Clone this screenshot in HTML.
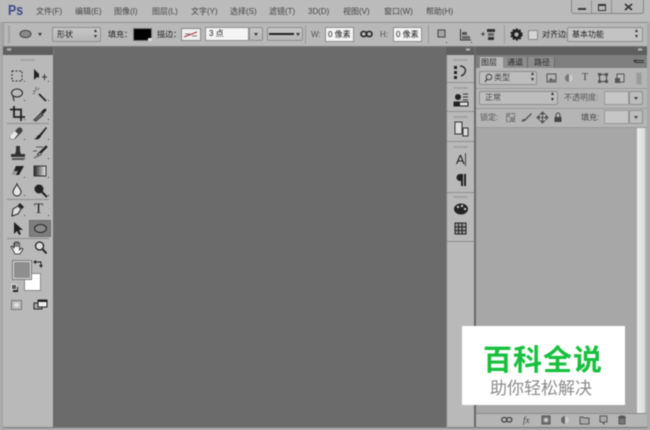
<!DOCTYPE html>
<html><head><meta charset="utf-8">
<style>
html,body{margin:0;padding:0}
body{width:650px;height:430px;overflow:hidden;background:#b9b9b9;position:relative;font-family:"Liberation Sans","Noto Sans CJK SC",sans-serif;color:#222}
#w{position:absolute;left:0;top:0;width:650px;height:430px;overflow:hidden;filter:blur(.4px)}
.a{position:absolute;box-sizing:border-box}
.t{position:absolute;white-space:nowrap;font-size:8px;line-height:10px;color:#333}
.m{position:absolute;white-space:nowrap;font-size:8px;line-height:10px;color:#444;top:7px}
.box{position:absolute;box-sizing:border-box;background:linear-gradient(#c6c6c6,#b6b6b6);border:1px solid #8f8f8f;border-radius:2px}
.wbox{position:absolute;box-sizing:border-box;background:#f4f4f4;border:1px solid #8f8f8f;font-size:8px;line-height:12px;color:#222;white-space:nowrap}
svg{position:absolute;overflow:visible}
.d{position:absolute;width:1px;height:1px;background:#444}
.grip{position:absolute;height:2px;background:repeating-linear-gradient(90deg,#8c8c8c 0 1px,transparent 1px 2px)}
.sep{position:absolute;background:#8e8e8e;height:1px}
</style></head>
<body><div id="w">
<!-- title bar -->
<div class="a" style="left:0;top:0;width:650px;height:22px;background:#bbb"></div>
<div class="t" style="left:8px;top:2px;font-size:15px;line-height:18px;font-weight:bold;color:#414a8c;transform:scaleX(.82);transform-origin:left top">Ps</div>
<div class="m" style="left:36px">文件(F)</div>
<div class="m" style="left:75px">编辑(E)</div>
<div class="m" style="left:114px">图像(I)</div>
<div class="m" style="left:152px">图层(L)</div>
<div class="m" style="left:191px">文字(Y)</div>
<div class="m" style="left:230px">选择(S)</div>
<div class="m" style="left:269px">滤镜(T)</div>
<div class="m" style="left:308px">3D(D)</div>
<div class="m" style="left:343px">视图(V)</div>
<div class="m" style="left:384px">窗口(W)</div>
<div class="m" style="left:426px">帮助(H)</div>
<!-- window buttons -->
<div class="a" style="left:571px;top:0;width:73px;height:14px;background:#b9b9b9;border:1px solid #858585;border-top:0;border-radius:0 0 3px 3px"></div>
<div class="a" style="left:591px;top:0;width:1px;height:13px;background:#8f8f8f"></div>
<div class="a" style="left:611px;top:0;width:1px;height:13px;background:#8f8f8f"></div>
<div class="a" style="left:578px;top:8px;width:8px;height:2px;background:#3a3a3a"></div>
<div class="a" style="left:598px;top:4px;width:8px;height:7px;border:1px solid #333;border-top-width:2px"></div>
<svg style="left:624px;top:3px" width="9" height="8"><path d="M1 1l7 6M8 1L1 7" stroke="#333" stroke-width="1.700" fill="none"/></svg>
<!-- options bar -->
<div class="a" style="left:3px;top:22px;width:644px;height:25px;background:#b8b8b8;border-top:1px solid #8f8f8f;border-left:1px solid #999"></div>
<div class="a" style="left:8px;top:26px;width:2px;height:17px;background:repeating-linear-gradient(#8c8c8c 0 1px,transparent 1px 2px)"></div>
<svg style="left:19px;top:29px" width="14" height="10"><ellipse cx="6.500" cy="5" rx="5.500" ry="3.600" fill="#8a8a8a" stroke="#444"/></svg>
<div class="a" style="left:38px;top:33px;border:2px solid transparent;border-top:3px solid #333"></div>
<div class="box" style="left:52px;top:27px;width:49px;height:15px"></div>
<div class="t" style="left:57px;top:30px;color:#222">形状</div>
<div class="t" style="left:94px;top:28px;font-size:6px;line-height:6px">▴</div><div class="t" style="left:94px;top:34px;font-size:6px;line-height:6px">▾</div>
<div class="t" style="left:108px;top:30px;color:#222">填充：</div>
<div class="a" style="left:133px;top:28px;width:19px;height:13px;background:#000;border:1px solid #777"></div>
<div class="a" style="left:148px;top:38px;width:4px;height:3px;background:#ddd"></div>
<div class="t" style="left:157px;top:30px;color:#222">描边：</div>
<div class="a" style="left:181px;top:28px;width:20px;height:13px;background:#f0f0f0;border:1px solid #888"></div>
<svg style="left:183px;top:30px" width="16" height="9"><path d="M1 7L14 2" stroke="#b03040" stroke-width="1"/><path d="M2 4h5M9 6h5" stroke="#777"/></svg>
<div class="wbox" style="left:205px;top:27px;width:44px;height:14px;padding-left:3px">3 点</div>
<div class="box" style="left:249px;top:27px;width:14px;height:14px"></div>
<div class="a" style="left:254px;top:33px;border:2px solid transparent;border-top:3px solid #333"></div>
<div class="box" style="left:267px;top:27px;width:36px;height:14px"></div>
<div class="a" style="left:269px;top:33px;width:25px;height:2px;background:#222"></div>
<div class="a" style="left:296px;top:33px;border:2px solid transparent;border-top:3px solid #333"></div>
<div class="a" style="left:305px;top:25px;width:1px;height:19px;background:#999"></div>
<div class="t" style="left:311px;top:30px;color:#555">W:</div>
<div class="wbox" style="left:325px;top:27px;width:29px;height:15px;padding-left:2px;line-height:13px">0 像素</div>
<svg style="left:360px;top:30px" width="13" height="8"><rect x="1" y="1.500" width="5.500" height="5" rx="2.500" fill="none" stroke="#222" stroke-width="1.600"/><rect x="6.500" y="1.500" width="5.500" height="5" rx="2.500" fill="none" stroke="#222" stroke-width="1.600"/></svg>
<div class="t" style="left:380px;top:30px;color:#555">H:</div>
<div class="wbox" style="left:393px;top:27px;width:29px;height:15px;padding-left:2px;line-height:13px">0 像素</div>
<div class="a" style="left:428px;top:25px;width:1px;height:19px;background:#999"></div>
<svg style="left:436px;top:28px" width="12" height="14"><rect x="2" y="2" width="7" height="7" fill="#a5a5a5" stroke="#444"/></svg>
<div class="d" style="left:446px;top:42px"></div>
<svg style="left:459px;top:28px" width="14" height="14"><path d="M1.500 1v11H12" fill="none" stroke="#333"/><rect x="3" y="4" width="5" height="3" fill="#555"/><rect x="3" y="8" width="8" height="3" fill="#666"/></svg>
<div class="d" style="left:471px;top:42px"></div>
<svg style="left:481px;top:27px" width="16" height="15"><path d="M0 7h4M2 5v4" stroke="#444"/><rect x="6" y="2" width="8" height="3" fill="#333"/><rect x="7" y="6" width="6" height="3" fill="#666"/><rect x="7" y="10" width="6" height="3" fill="#333"/></svg>
<div class="a" style="left:504px;top:25px;width:1px;height:19px;background:#999"></div>
<svg style="left:510px;top:28px" width="13" height="13"><circle cx="6.500" cy="6.500" r="3.600" fill="none" stroke="#222" stroke-width="3"/><circle cx="6.500" cy="6.500" r="5.400" fill="none" stroke="#222" stroke-width="1.400" stroke-dasharray="2 1.500"/></svg>
<div class="a" style="left:528px;top:30px;width:10px;height:10px;background:#d4d4d4;border:1px solid #888;border-radius:1px"></div>
<div class="t" style="left:542px;top:30px;color:#222">对齐边缘</div>
<div class="box" style="left:567px;top:27px;width:76px;height:15px;background:#c3c3c3"></div>
<div class="t" style="left:572px;top:30px;color:#222">基本功能</div>
<div class="t" style="left:635px;top:28px;font-size:6px;line-height:6px">▴</div><div class="t" style="left:635px;top:34px;font-size:6px;line-height:6px">▾</div>
<!-- main dark band -->
<div class="a" style="left:0;top:46px;width:650px;height:384px;background:#7a7a7a"></div>
<div class="a" style="left:0;top:22px;width:3px;height:408px;background:#a6a6a6"></div>
<div class="a" style="left:647px;top:22px;width:3px;height:408px;background:#a8a8a8"></div>
<div class="a" style="left:0;top:428px;width:650px;height:2px;background:#a8a8a8"></div>
<!-- left toolbar -->
<div class="a" style="left:3px;top:47px;width:50px;height:8px;background:#5f5f5f"></div>
<div class="t" style="left:6px;top:46px;font-size:6px;line-height:9px;color:#bbb;letter-spacing:-1px">◂◂</div>
<div class="a" style="left:3px;top:55px;width:51px;height:372px;background:#b9b9b9;border-right:1px solid #6a6a6a"></div>
<div class="grip" style="left:21px;top:59px;width:14px"></div>
<!-- tools -->
<svg style="left:10px;top:68px" width="40" height="18"><rect x="2" y="3" width="10" height="10" fill="none" stroke="#333" stroke-dasharray="2 1.500"/></svg>
<svg style="left:32px;top:68px" width="16" height="16"><path d="M2 1v11l3-3 2 1V6z" fill="#222"/><path d="M10 9h5M12.500 6v6" stroke="#333"/></svg>
<svg style="left:10px;top:87px" width="16" height="16"><ellipse cx="7" cy="6" rx="5.500" ry="4" fill="none" stroke="#222"/><path d="M3 9c0 2 1 3 1 5" stroke="#222" fill="none"/></svg>
<svg style="left:32px;top:87px" width="16" height="16"><path d="M7 7l7 7" stroke="#222" stroke-width="1.800"/><path d="M1 4h3M4 0v3M7 1L5.500 3M1 7l2-1.500" stroke="#666"/></svg>
<svg style="left:10px;top:106px" width="16" height="16"><path d="M4 0v11h11M0 3.500h11V15" fill="none" stroke="#222" stroke-width="1.800"/></svg>
<svg style="left:32px;top:106px" width="16" height="16"><path d="M2 14l7-7 2 2-7 6z" fill="#777" stroke="#333"/><path d="M9 6l3-3c2-1 3 0 2 2l-3 3z" fill="#222"/></svg>
<div class="sep" style="left:7px;top:123px;width:42px"></div>
<svg style="left:9px;top:126px" width="16" height="15"><path d="M1 10L9 2c2-2 6 1 4 4l-7 7c-3 2-7-1-5-3z" fill="#444"/><path d="M1 10l5-5 3 3-4 5c-2 1-5-1-4-3z" fill="#e8e8e8"/></svg>
<svg style="left:32px;top:126px" width="16" height="16"><path d="M14 1L7 9l2 1 6-8zM7 9c-2 0-2 2-3 3l-2 1c3 1 6 0 7-3z" fill="#222"/></svg>
<svg style="left:10px;top:145px" width="16" height="16"><path d="M6 1h4v5l1 3h4v3H1V9h4l1-3z" fill="#333"/><rect x="2" y="13" width="12" height="2" fill="#555"/></svg>
<svg style="left:32px;top:145px" width="16" height="16"><path d="M14 1L8 7l1 1 6-6zM8 7c-2 1-1 2-3 3" stroke="#222" fill="#222"/><path d="M4 2h7M1 6h4M2 13l8-4" stroke="#555"/></svg>
<svg style="left:10px;top:164px" width="16" height="14"><path d="M6 2h8L9 11H2z" fill="#222"/><path d="M2 11l2-4h4l-2 4z" fill="#999"/></svg>
<svg style="left:32px;top:164px" width="16" height="14"><defs><linearGradient id="g1"><stop offset="0" stop-color="#222"/><stop offset="1" stop-color="#eee"/></linearGradient></defs><rect x="2" y="2" width="12" height="10" fill="url(#g1)" stroke="#333"/></svg>
<svg style="left:10px;top:183px" width="16" height="16"><path d="M7 1c1 3 4 5 4 8a4 4 0 0 1-8 0c0-3 3-5 4-8z" fill="#e4e4e4" stroke="#222"/></svg>
<svg style="left:32px;top:183px" width="16" height="16"><circle cx="7" cy="6" r="4.500" fill="#222"/><path d="M10 9l5 5" stroke="#222" stroke-width="2"/></svg>
<div class="sep" style="left:7px;top:199px;width:42px"></div>
<svg style="left:10px;top:202px" width="16" height="16"><path d="M2 14l1-7 5-3 3 3-3 5z" fill="#ddd" stroke="#222"/><path d="M8 3l2-2 4 4-2 2z" fill="#222"/></svg>
<div class="t" style="left:34px;top:201px;font-family:'Liberation Serif',serif;font-size:15px;line-height:16px;color:#222">T</div>
<svg style="left:10px;top:221px" width="16" height="16"><path d="M4 1v12l3-3 2 4 2-1-2-4h4z" fill="#222"/></svg>
<div class="a" style="left:29px;top:220px;width:22px;height:17px;background:#7e7e7e;border:1px solid #6c6c6c"></div>
<svg style="left:33px;top:223px" width="15" height="11"><ellipse cx="7.500" cy="5.500" rx="6" ry="4" fill="#8a8a8a" stroke="#222"/></svg>
<div class="sep" style="left:7px;top:238px;width:42px"></div>
<svg style="left:10px;top:240px" width="16" height="16"><path d="M3 10L1 7l1-1 2 2V3h1v4-5h1.500v5-5H8v5-4h1.500v7l2-2 1.500 1-3 5H5z" fill="#f2f2f2" stroke="#222" stroke-width=".8"/></svg>
<svg style="left:33px;top:240px" width="16" height="16"><circle cx="6.500" cy="6" r="4" fill="#ddd" stroke="#222" stroke-width="1.300"/><path d="M9.500 9l4 4.500" stroke="#222" stroke-width="2"/></svg>
<!-- colours -->
<div class="a" style="left:24px;top:273px;width:17px;height:18px;background:#fff;border:1px solid #888"></div>
<div class="a" style="left:13px;top:261px;width:18px;height:18px;background:#8e8e8e;border:1px solid #ddd;outline:1px solid #777"></div>
<svg style="left:33px;top:259px" width="11" height="10"><path d="M2 3h6v5" fill="none" stroke="#222"/><path d="M0 3l3-2v4zM8 9L6 6h4z" fill="#222"/></svg>
<div class="a" style="left:13px;top:287px;width:5px;height:5px;background:#222"></div>
<div class="a" style="left:11px;top:284px;width:6px;height:6px;background:#555;border:1px solid #ddd"></div>
<div class="a" style="left:11px;top:300px;width:11px;height:10px;background:#bcbcbc;border:1px solid #777"></div>
<div class="a" style="left:14px;top:303px;width:5px;height:4px;background:#e2e2e2;border-radius:50%"></div>
<svg style="left:33px;top:299px" width="16" height="12"><rect x="1" y="4" width="8" height="6" fill="#aaa" stroke="#222"/><rect x="5" y="1" width="9" height="7" fill="#eee" stroke="#222"/><rect x="5" y="1" width="9" height="2" fill="#222"/></svg>
<!-- small corner dots -->
<div class="d" style="left:24px;top:81px"></div><div class="d" style="left:48px;top:81px"></div>
<div class="d" style="left:24px;top:100px"></div><div class="d" style="left:48px;top:100px"></div>
<div class="d" style="left:24px;top:119px"></div><div class="d" style="left:48px;top:119px"></div>
<div class="d" style="left:24px;top:139px"></div><div class="d" style="left:48px;top:139px"></div>
<div class="d" style="left:24px;top:158px"></div><div class="d" style="left:48px;top:158px"></div>
<div class="d" style="left:24px;top:177px"></div><div class="d" style="left:48px;top:177px"></div>
<div class="d" style="left:24px;top:195px"></div><div class="d" style="left:48px;top:195px"></div>
<div class="d" style="left:24px;top:215px"></div><div class="d" style="left:48px;top:215px"></div>
<!-- canvas -->
<div class="a" style="left:54px;top:47px;width:392px;height:380px;background:#6b6b6b"></div>
<!-- right dock -->
<div class="a" style="left:446px;top:47px;width:201px;height:8px;background:#5f5f5f"></div>
<div class="t" style="left:466px;top:46px;font-size:6px;line-height:9px;color:#bbb;letter-spacing:-1px">▸▸</div>
<div class="t" style="left:638px;top:46px;font-size:6px;line-height:9px;color:#bbb;letter-spacing:-1px">▸▸</div>
<div class="a" style="left:447px;top:55px;width:27px;height:372px;background:#b9b9b9"></div>
<div class="a" style="left:474px;top:47px;width:2px;height:380px;background:#6a6a6a"></div>
<div class="grip" style="left:454px;top:59px;width:13px"></div>
<svg style="left:453px;top:64px" width="16" height="16"><rect x="1" y="2" width="3" height="3" fill="#222"/><rect x="1" y="7" width="3" height="3" fill="#222"/><rect x="1" y="12" width="3" height="3" fill="#222"/><path d="M7 2c6 0 8 7 1 10" fill="none" stroke="#333" stroke-width="1.500"/></svg>
<div class="sep" style="left:447px;top:82px;width:27px"></div>
<div class="grip" style="left:454px;top:87px;width:13px"></div>
<svg style="left:453px;top:92px" width="17" height="16"><circle cx="5" cy="5" r="3" fill="#222"/><path d="M10 2h5M10 5h5M10 8h5" stroke="#333"/><rect x="1" y="10" width="14" height="4" fill="#ddd" stroke="#222"/><rect x="1" y="10" width="6" height="4" fill="#222"/></svg>
<div class="sep" style="left:447px;top:111px;width:27px"></div>
<div class="grip" style="left:454px;top:116px;width:13px"></div>
<svg style="left:453px;top:120px" width="17" height="18"><path d="M2 2h7v12H2z" fill="#ddd" stroke="#333"/><path d="M10 8h5v8h-5z" fill="#ddd" stroke="#333"/></svg>
<div class="sep" style="left:447px;top:141px;width:27px"></div>
<div class="grip" style="left:454px;top:146px;width:13px"></div>
<div class="t" style="left:456px;top:152px;font-size:13px;line-height:15px;color:#222">A</div>
<div class="a" style="left:465px;top:153px;width:1px;height:13px;background:#444"></div>
<svg style="left:456px;top:173px" width="12" height="14"><path d="M7 1H4a3.500 3.500 0 0 0 0 7h1v5h2zM8 1h2v12H8z" fill="#222"/></svg>
<div class="sep" style="left:447px;top:192px;width:27px"></div>
<div class="grip" style="left:454px;top:196px;width:13px"></div>
<svg style="left:453px;top:202px" width="16" height="14"><ellipse cx="8" cy="7" rx="7" ry="5.500" fill="#222"/><circle cx="5" cy="5" r="1.200" fill="#ccc"/><circle cx="9" cy="4" r="1.200" fill="#ccc"/><circle cx="12" cy="7" r="1.200" fill="#ccc"/></svg>
<svg style="left:454px;top:222px" width="13" height="14"><rect x="1" y="1" width="11" height="11" fill="#999" stroke="#222"/><path d="M1 5h11M1 8.500h11M4.500 1v11M8 1v11" stroke="#222"/></svg>
<div class="sep" style="left:447px;top:241px;width:27px"></div>
<!-- layers panel -->
<div class="a" style="left:476px;top:55px;width:171px;height:372px;background:#b5b5b5"></div>
<div class="a" style="left:476px;top:55px;width:171px;height:13px;background:#7f7f7f"></div>
<div class="a" style="left:480px;top:57px;width:23px;height:12px;background:#b9b9b9"></div>
<div class="t" style="left:481px;top:58px;color:#222">图层</div>
<div class="a" style="left:503px;top:57px;width:25px;height:11px;background:#8d8d8d;border-right:1px solid #666"></div>
<div class="t" style="left:507px;top:58px;color:#2a2a2a">通道</div>
<div class="a" style="left:528px;top:57px;width:27px;height:11px;background:#8d8d8d;border-right:1px solid #666"></div>
<div class="t" style="left:534px;top:58px;color:#2a2a2a">路径</div>
<div class="a" style="left:636px;top:60px;width:8px;height:1px;background:#333"></div>
<div class="a" style="left:636px;top:62px;width:8px;height:1px;background:#333"></div>
<div class="a" style="left:631px;top:59px;border:2px solid transparent;border-right:3px solid #333"></div>
<div class="box" style="left:479px;top:71px;width:58px;height:14px;background:#bdbdbd"></div>
<svg style="left:484px;top:73px" width="9" height="10"><circle cx="5" cy="4" r="2.800" fill="none" stroke="#444"/><path d="M3 6l-2 3" stroke="#444" stroke-width="1.300"/></svg>
<div class="t" style="left:494px;top:73px;color:#444">类型</div>
<div class="t" style="left:531px;top:71px;font-size:6px;line-height:6px">▴</div><div class="t" style="left:531px;top:77px;font-size:6px;line-height:6px">▾</div>
<svg style="left:546px;top:73px" width="11" height="10"><rect x="1" y="1" width="9" height="8" fill="#b5b5b5" stroke="#555"/><path d="M2 8l3-3 2 2 2-1v2z" fill="#555"/></svg>
<svg style="left:564px;top:73px" width="10" height="10"><circle cx="5" cy="5" r="4" fill="#777"/><path d="M5 1a4 4 0 0 1 0 8z" fill="#ccc"/></svg>
<div class="t" style="left:582px;top:72px;font-family:'Liberation Serif',serif;font-size:10px;line-height:11px;color:#444">T</div>
<svg style="left:598px;top:73px" width="10" height="10"><rect x="1.500" y="1.500" width="7" height="7" fill="none" stroke="#444"/><path d="M0 0h3v3H0zM7 0h3v3H7zM0 7h3v3H0zM7 7h3v3H7z" fill="#555"/></svg>
<svg style="left:615px;top:73px" width="10" height="11"><rect x="2" y="1" width="7" height="8" fill="#bbb" stroke="#555"/><rect x="0" y="5" width="5" height="5" fill="#555"/></svg>
<div class="a" style="left:636px;top:72px;width:6px;height:13px;background:#9a9a9a;border:1px solid #a8a8a8"></div>
<div class="sep" style="left:476px;top:88px;width:171px;background:#9b9b9b"></div>
<div class="box" style="left:479px;top:91px;width:79px;height:14px;background:#bdbdbd"></div>
<div class="t" style="left:485px;top:93px;color:#444">正常</div>
<div class="t" style="left:551px;top:91px;font-size:6px;line-height:6px">▴</div><div class="t" style="left:551px;top:97px;font-size:6px;line-height:6px">▾</div>
<div class="t" style="left:564px;top:93px;color:#555">不透明度:</div>
<div class="a" style="left:604px;top:91px;width:25px;height:14px;background:#c6c6c6;border:1px solid #999"></div>
<div class="box" style="left:629px;top:91px;width:14px;height:14px;background:#bdbdbd"></div>
<div class="a" style="left:634px;top:97px;border:2px solid transparent;border-top:3px solid #444"></div>
<div class="sep" style="left:476px;top:108px;width:171px;background:#9b9b9b"></div>
<div class="t" style="left:480px;top:113px;color:#555">锁定:</div>
<svg style="left:505px;top:112px" width="11" height="11"><rect x="1.500" y="1.500" width="8" height="8" fill="none" stroke="#555" stroke-dasharray="1.500 1"/><path d="M1 1h4v4H1zM5 5h4v4H5z" fill="#888"/></svg>
<svg style="left:520px;top:112px" width="12" height="11"><path d="M11 1L5 7 3 7 1 10l4-1 2-2 5-5z" fill="#555"/></svg>
<svg style="left:537px;top:112px" width="11" height="11"><path d="M5.500 0l2 2h-4zM5.500 11l2-2h-4zM0 5.500l2-2v4zM11 5.500l-2-2v4zM1 5.500h9M5.500 1v9" fill="#555" stroke="#555"/></svg>
<svg style="left:553px;top:112px" width="10" height="11"><path d="M3 5V3a2 2 0 0 1 4 0v2" fill="none" stroke="#444"/><rect x="1.500" y="5" width="7" height="5" fill="#444"/></svg>
<div class="t" style="left:581px;top:113px;color:#444">填充:</div>
<div class="a" style="left:604px;top:110px;width:25px;height:14px;background:#c6c6c6;border:1px solid #999"></div>
<div class="box" style="left:629px;top:110px;width:14px;height:14px;background:#bdbdbd"></div>
<div class="a" style="left:634px;top:116px;border:2px solid transparent;border-top:3px solid #444"></div>
<div class="a" style="left:476px;top:127px;width:171px;height:1px;background:#999"></div>
<div class="a" style="left:476px;top:128px;width:161px;height:285px;background:#a7a7a7"></div>
<div class="a" style="left:637px;top:128px;width:8px;height:285px;background:linear-gradient(90deg,#eaeaea,#dcdcdc)"></div>
<div class="a" style="left:645px;top:128px;width:2px;height:285px;background:#b5b5b5"></div>
<!-- bottom bar -->
<div class="a" style="left:476px;top:413px;width:171px;height:1px;background:#8c8c8c"></div>
<div class="a" style="left:476px;top:414px;width:171px;height:13px;background:#b5b5b5"></div>
<svg style="left:501px;top:416px" width="12" height="8"><rect x=".8" y="1.500" width="5" height="4.500" rx="2.200" fill="none" stroke="#444" stroke-width="1.300"/><rect x="5.800" y="1.500" width="5" height="4.500" rx="2.200" fill="none" stroke="#444" stroke-width="1.300"/></svg>
<div class="t" style="left:523px;top:415px;font-family:'Liberation Serif',serif;font-style:italic;font-size:9px;color:#444">fx</div>
<svg style="left:541px;top:415px" width="10" height="10"><rect x="1" y="1" width="8" height="8" fill="#777" stroke="#555"/><circle cx="5" cy="5" r="2" fill="#ccc"/></svg>
<svg style="left:560px;top:415px" width="10" height="10"><circle cx="5" cy="5" r="4" fill="#666"/><path d="M5 1a4 4 0 0 1 0 8z" fill="#ccc"/></svg>
<svg style="left:579px;top:415px" width="11" height="10"><path d="M1 2h3l1 1h5v6H1z" fill="#aaa" stroke="#555"/></svg>
<svg style="left:598px;top:415px" width="10" height="10"><path d="M2 1h7v6H6v2l-2-2H2z" fill="#aaa" stroke="#555"/></svg>
<svg style="left:617px;top:415px" width="10" height="10"><path d="M1 2h8M3 2V1h4v1M2 3h6v6H2z" fill="#777" stroke="#555"/></svg>
<!-- watermark -->
<div class="a" style="left:462px;top:326px;width:163px;height:79px;background:#fff"></div>
<div class="t" style="left:483px;top:342px;font-size:29px;line-height:32px;font-weight:bold;color:#18c03e;letter-spacing:1px;font-family:'Noto Sans CJK SC',sans-serif">百科全说</div>
<div class="t" style="left:490px;top:377px;font-size:17px;line-height:20px;color:#8c8c8c;font-family:'Noto Sans CJK SC',sans-serif">助你轻松解决</div>
</div></body></html>
